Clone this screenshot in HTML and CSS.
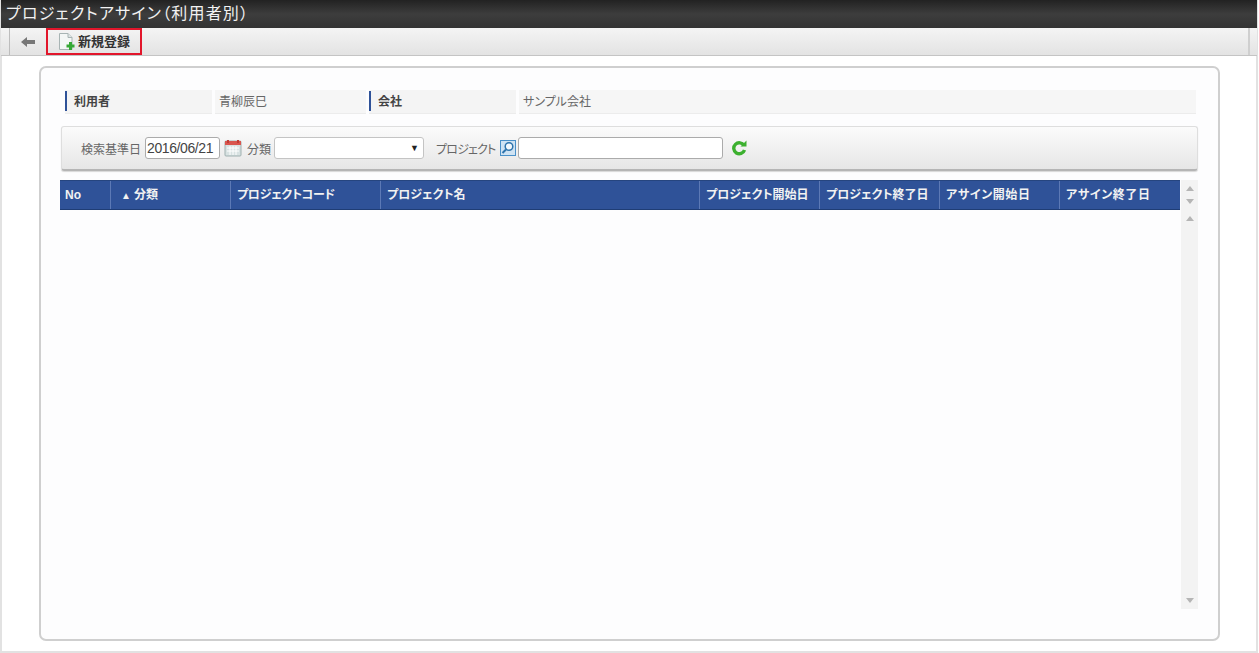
FILE: index.html
```html
<!DOCTYPE html>
<html lang="ja">
<head>
<meta charset="utf-8">
<title>プロジェクトアサイン（利用者別）</title>
<link rel="stylesheet" href="styles.css">
</head>
<body>
<div class="frame">
  <header class="titlebar">プロジェクトアサイン（利用者別）</header>
  <nav class="toolbar">
    <span class="back">
      <svg width="14" height="12" viewBox="0 0 14 12"><path d="M0 6 6 1V4H14V8H6V11Z" fill="#777"/></svg>
    </span>
    <span class="newbtn">
      <svg width="17" height="18" viewBox="0 0 17 18"><path d="M.5 .5H9L13 4.500V16.500H.5Z" fill="#f4f7f6" stroke="#a8b4b4"/><path d="M9 .5V4.500H13" fill="#dfe6e6" stroke="#a8b4b4"/><path d="M11.500 9V17M7.500 13H15.500" stroke="#35a835" stroke-width="3"/></svg>
      <b>新規登録</b>
    </span>
  </nav>
  <main class="panel">
    <div class="info">
      <div class="label">利用者</div>
      <div class="value">青柳辰巳</div>
      <div class="label">会社</div>
      <div class="value grow">サンプル会社</div>
    </div>
    <div class="search">
      <span class="cap first">検索基準日</span>
      <span class="field date">2016/06/21</span>
      <svg class="cal" width="18" height="18" viewBox="0 0 18 18"><rect x="1" y="2" width="16" height="15" rx="1" fill="#d8e2e2" stroke="#9fb0b0"/><rect x="1" y="2" width="16" height="4" fill="#d9564f"/><path d="M4 1V4M14 1V4" stroke="#c23b35" stroke-width="2"/><path d="M3 9H15M3 12H15M6 7V16M9 7V16M12 7V16" stroke="#fff"/></svg>
      <span class="cap">分類</span>
      <span class="field select"><i>▼</i></span>
      <span class="cap project">プロジェクト</span>
      <svg class="lens" width="16" height="16" viewBox="0 0 16 16"><rect x=".5" y=".5" width="15" height="15" fill="#cfe3f3" stroke="#4a90c8"/><circle cx="9" cy="6.500" r="3.800" fill="#f2f8fc" stroke="#2e74ad" stroke-width="1.500"/><path d="M6 9.500 2.500 13" stroke="#2e74ad" stroke-width="2"/></svg>
      <span class="field text"></span>
      <svg class="reload" width="16" height="16" viewBox="0 0 16 16"><path d="M13 5.500A5.500 5.500 0 1 0 13.500 10" fill="none" stroke="#3cb02f" stroke-width="3.400"/><path d="M9.500 6.500H15.500V.5Z" fill="#3cb02f"/></svg>
    </div>
    <div class="grid">
      <div class="tablewrap">
        <div class="thead">
          <div class="th no">No</div>
          <div class="th kind"><span class="sort">▲</span>分類</div>
          <div class="th code">プロジェクトコード</div>
          <div class="th name">プロジェクト名</div>
          <div class="th date">プロジェクト開始日</div>
          <div class="th date">プロジェクト終了日</div>
          <div class="th date wide">アサイン開始日</div>
          <div class="th date wide">アサイン終了日</div>
        </div>
      </div>
      <div class="scroll">
        <span class="up"></span>
        <span class="down"></span>
        <span class="up second"></span>
        <span class="down last"></span>
      </div>
    </div>
  </main>
</div>
</body>
</html>
```
FILE: styles.css
```css
* { box-sizing: border-box; }
html, body { margin: 0; height: 100%; }
body {
  width: 1259px;
  height: 653px;
  overflow: hidden;
  background: #fff;
  font-family: "Liberation Sans", "Noto Sans CJK JP", sans-serif;
  font-size: 12px;
  color: #555;
  font-feature-settings: "palt";
}
.frame {
  height: 653px;
  width: 1258px;
  border: 1px solid #e2e2e2;
  border-width: 0 2px 2px 2px;
  background: #fff;
  display: flex;
  flex-direction: column;
}
.titlebar {
  height: 28px;
  margin: 0 -1px;
  padding: 4px 0 0 5px;
  background: linear-gradient(#222 0, #3d3d3d 50%, #333 100%);
  color: #f2f2f2;
  font-size: 16px;
  line-height: 20px;
  letter-spacing: 1.2px;
  white-space: nowrap;
}
.toolbar {
  height: 28px;
  display: flex;
  align-items: stretch;
  background: linear-gradient(#f4f4f4, #e3e3e3);
  border-bottom: 1px solid #c4c4c4;
  margin: 0 -1px;
  padding-left: 8px;
  position: relative;
}
.toolbar::after {
  content: "";
  position: absolute;
  right: 7px;
  top: 0;
  bottom: 0;
  width: 2px;
  background: #cfcfcf;
}
.back {
  width: 37px;
  border-left: 1px solid #bdbdbd;
  display: flex;
  align-items: center;
  justify-content: flex-start;
  padding-left: 11px;
}
.newbtn {
  width: 96px;
  height: 27px;
  border: 2px solid #e2162b;
  display: flex;
  align-items: center;
  padding-left: 11px;
  gap: 2px;
  color: #333;
}
.newbtn b { font-size: 13px; line-height: 14px; padding-top: 1px; }
.panel {
  width: 1181px;
  height: 575px;
  margin: 10px 0 0 37px;
  border: 2px solid #cfcfcf;
  border-radius: 7px;
  background: #fdfdfe;
  padding: 22px 22px 0 19px;
}
.info {
  display: flex;
  height: 24px;
  margin-left: 5px;
  gap: 3px;
  line-height: 24px;
}
.label {
  width: 147px;
  background: #f4f4f4;
  border-bottom: 1px solid #ececec;
  font-weight: bold;
  color: #444;
  padding-left: 9px;
  position: relative;
}
.label::before {
  content: "";
  position: absolute;
  left: 0;
  top: 1px;
  bottom: 2px;
  width: 2px;
  background: #2f5298;
}
.value {
  width: 151px;
  background: #f6f6f6;
  border-bottom: 1px solid #ececec;
  padding-left: 4px;
  color: #666;
}
.value.grow { flex: 1; }
.search {
  display: flex;
  align-items: center;
  width: 1137px;
  height: 45px;
  margin: 12px 0 0 1px;
  border: 1px solid #dedede;
  border-bottom: 2px solid #b5b5b5;
  border-radius: 3px;
  background: linear-gradient(#fbfbfb, #e6e6e6);
  padding-left: 19px;
  box-shadow: 0 1px 1px #d8d8d8;
}
.cap { color: #666; white-space: nowrap; }
.first { margin-right: 4px; }
.field {
  display: block;
  height: 22px;
  border: 1px solid #ababab;
  border-radius: 3px;
  background: #fff;
}
.field.date {
  width: 75px;
  padding-left: 1px;
  font-size: 14px;
  line-height: 20px;
  letter-spacing: -.4px;
  color: #444;
}
.cal { margin: 0 5px 0 4px; }
.select {
  width: 150px;
  margin-left: 3px;
  position: relative;
  border-color: #c4c4c4;
}
.select i {
  position: absolute;
  right: 4px;
  top: 3px;
  font-style: normal;
  font-size: 9px;
  line-height: 14px;
  color: #222;
}
.project { margin-left: 12px; letter-spacing: -.8px; }
.lens { margin: 0 2px 0 4px; }
.field.text { width: 205px; }
.reload { margin-left: 8px; }
.grid {
  display: flex;
  margin-top: 9px;
  height: 429px;
  width: 1138px;
}
.tablewrap { width: 1120px; }
.thead {
  display: flex;
  height: 30px;
  background: #2f5298;
  border-top: 1px solid #26457f;
  border-bottom: 1px solid #1f3d75;
  color: #f2f2f2;
  font-weight: bold;
  line-height: 28px;
}
.th {
  border-left: 1px solid #5c79b5;
  padding-left: 6px;
  white-space: nowrap;
  overflow: hidden;
}
.th.no { width: 50px; border-left: 0; padding-left: 5px; }
.th.kind { width: 120px; padding-left: 10px; }
.th.code { width: 150px; letter-spacing: -.3px; }
.th.name { width: 319px; }
.th.date { width: 120px; }
.th.wide { letter-spacing: .6px; }
.sort { font-size: 10px; margin-right: 3px; font-weight: normal; }
.scroll {
  width: 17px;
  margin-left: 1px;
  background: #f3f3f3;
  position: relative;
}
.scroll span {
  position: absolute;
  left: 5px;
  width: 0;
  height: 0;
  border-left: 4px solid transparent;
  border-right: 4px solid transparent;
}
.up { top: 6px; border-bottom: 5px solid #b5b5b5; }
.down { top: 19px; border-top: 5px solid #b5b5b5; }
.up.second { top: 36px; }
.down.last { top: auto; bottom: 6px; }
```
